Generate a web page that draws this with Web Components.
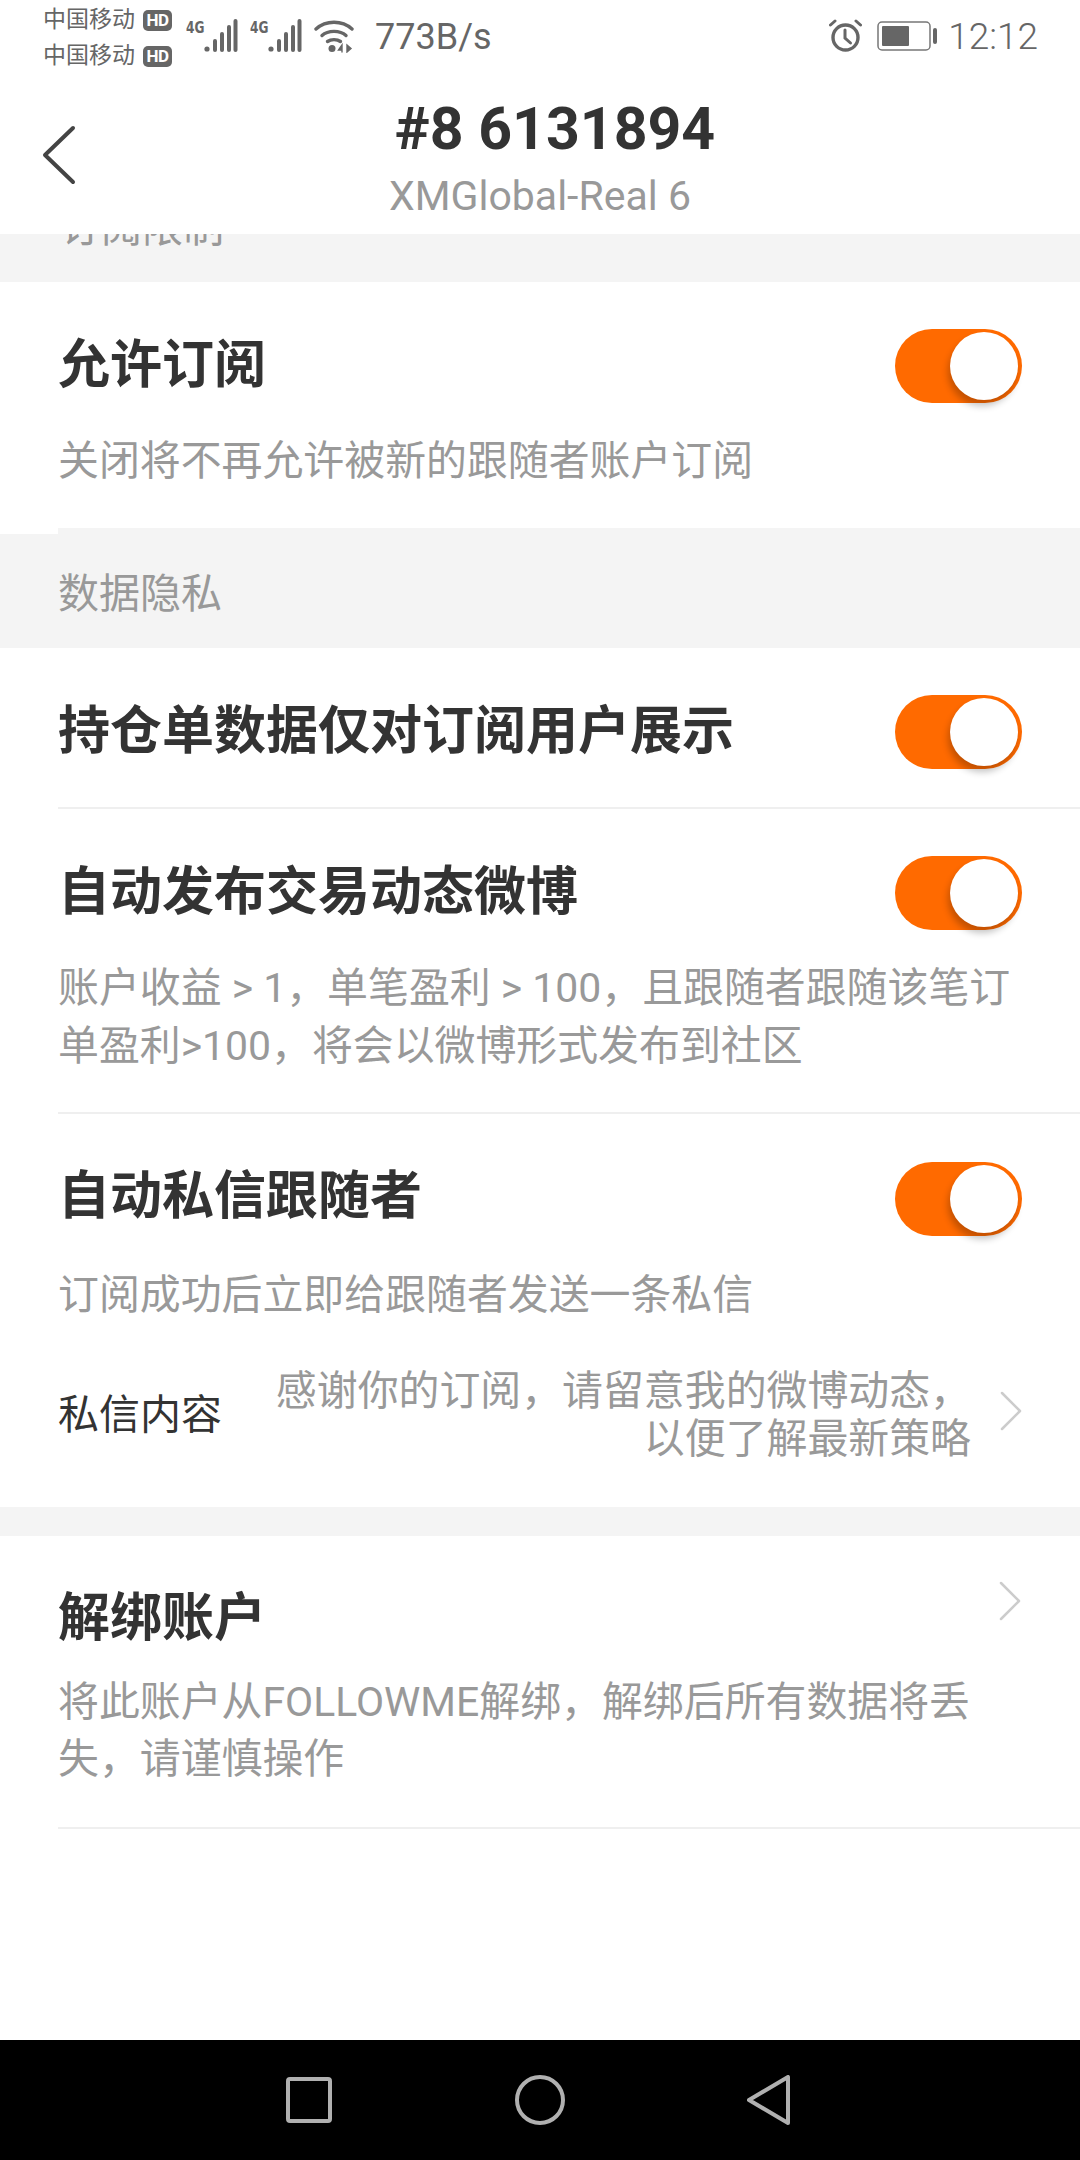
<!DOCTYPE html>
<html lang="zh">
<head>
<meta charset="utf-8">
<title>账户设置</title>
<style>
    html, body { margin: 0; padding: 0; background: #fff; }
    body {
        width: 1080px;
        height: 2160px;
        display: flex;
        flex-direction: column;
        overflow: hidden;
        font-family: Roboto, "Noto Sans CJK SC", sans-serif;
    }
</style>
</head>
<body>
<status-bar></status-bar>
<nav-header sub="XMGlobal-Real 6">#8 6131894</nav-header>
<peek-band>订阅限制</peek-band>

<setting-row style="--pt:47px;--gap:29px;--pb:38px">
    <span slot="title">允许订阅</span>
    <toggle-switch slot="control"></toggle-switch>
    <span slot="desc">关闭将不再允许被新的跟随者账户订阅</span>
</setting-row>

<section-label>数据隐私</section-label>

<setting-row divider style="--pt:47px;--gap:0px;--pb:38px">
    <span slot="title">持仓单数据仅对订阅用户展示</span>
    <toggle-switch slot="control"></toggle-switch>
</setting-row>
<setting-row divider style="--pt:47px;--gap:29px;--pb:37px">
    <span slot="title">自动发布交易动态微博</span>
    <toggle-switch slot="control"></toggle-switch>
    <span slot="desc">账户收益 &gt; 1，单笔盈利 &gt; 100，且跟随者跟随该笔订单盈利&gt;100，将会以微博形式发布到社区</span>
</setting-row>
<setting-row style="--pt:48px;--gap:30px;--pb:0px;--title-lift:4px">
    <span slot="title">自动私信跟随者</span>
    <toggle-switch slot="control"></toggle-switch>
    <span slot="desc">订阅成功后立即给跟随者发送一条私信</span>
    <message-row slot="extra" label="私信内容">感谢你的订阅，请留意我的微博动态，<br>以便了解最新策略</message-row>
</setting-row>

<gap-band></gap-band>

<setting-row divider style="--pt:46px;--gap:18px;--pb:39px;--desc-lh:57px">
    <span slot="title">解绑账户</span>
    <chevron-icon slot="control" style="margin:-36px 1px 0 0"></chevron-icon>
    <span slot="desc">将此账户从FOLLOWME解绑，解绑后所有数据将丢失，请谨慎操作</span>
</setting-row>

<page-spacer></page-spacer>
<system-nav></system-nav>

<script>
    const CJK = 'Roboto, "Noto Sans CJK SC", sans-serif';

    class StatusBar extends HTMLElement {
        constructor() {
            super();
            this.attachShadow({ mode: 'open' });
        }

        _signal() {
            return `
                <svg width="34" height="34" viewBox="0 0 34 34" fill="#666">
                    <circle cx="3" cy="30" r="2.6"/>
                    <rect x="9" y="20" width="4" height="13" rx="2"/>
                    <rect x="16" y="13" width="4" height="20" rx="2"/>
                    <rect x="23" y="6" width="4" height="27" rx="2"/>
                    <rect x="29.5" y="0" width="4" height="33" rx="2"/>
                </svg>`;
        }

        connectedCallback() {
            this.shadowRoot.innerHTML = `
                <style>
                    :host {
                        display: flex;
                        height: 74px;
                        flex: none;
                        background: #fff;
                        color: #666;
                        font-family: ${CJK};
                        box-sizing: border-box;
                        padding-left: 43px;
                    }
                    .carriers {
                        display: flex;
                        flex-direction: column;
                        gap: 8px;
                        padding-top: 6px;
                        width: 143px;
                        flex: none;
                    }
                    .carrier {
                        display: flex;
                        align-items: center;
                        gap: 8px;
                        height: 28px;
                        font-size: 23px;
                        line-height: 28px;
                        white-space: nowrap;
                    }
                    .hd {
                        width: 29px;
                        height: 21px;
                        border-radius: 5px;
                        background: #666;
                        color: #fff;
                        font-size: 17px;
                        line-height: 21px;
                        font-weight: 700;
                        text-align: center;
                        letter-spacing: -0.5px;
                    }
                    .net {
                        display: flex;
                        align-items: flex-start;
                        flex: none;
                        padding-top: 19px;
                    }
                    .net b {
                        font: 700 15px/18px "Liberation Sans Narrow", "DejaVu Sans Condensed", Roboto, sans-serif;
                        width: 18px;
                        transform: scaleX(.9);
                        transform-origin: left;
                    }
                    .wifi { margin: 20px 0 0 12px; flex: none; }
                    .speed {
                        margin-left: 21px;
                        padding-top: 17px;
                        font-size: 36px;
                        line-height: 40px;
                        flex: 1;
                    }
                    .right {
                        display: flex;
                        align-items: flex-start;
                        padding: 19px 42px 0 0;
                    }
                    .time {
                        margin: -2px 0 0 10px;
                        font-size: 37px;
                        font-weight: 300;
                        line-height: 40px;
                    }
                    .alarm { margin-right: 15px; }
                </style>
                <div class="carriers">
                    <div class="carrier">中国移动<span class="hd">HD</span></div>
                    <div class="carrier">中国移动<span class="hd">HD</span></div>
                </div>
                <div class="net"><b>4G</b>${this._signal()}</div>
                <div class="net" style="margin-left:12px"><b>4G</b>${this._signal()}</div>
                <svg class="wifi" width="40" height="33" viewBox="0 0 40 33" fill="none" stroke="#666" stroke-width="3.4" stroke-linecap="round">
                    <path d="M2 9 C12 0 28 0 38 9"/>
                    <path d="M8 15.500 C14 10 26 10 32 15.500"/>
                    <path d="M13.500 21.500 C17 19 23 19 26.500 21.500"/>
                    <circle cx="18" cy="28.500" r="3.500" fill="#666" stroke="none"/>
                    <path d="M28 25 L24.500 30 H28 Z M28 25 V32 M33 25 V32 L37 28.500 Z" stroke-width="1.400" fill="#666"/>
                </svg>
                <div class="speed">773B/s</div>
                <div class="right">
                    <svg class="alarm" width="33" height="34" viewBox="0 0 33 34" fill="none" stroke="#666" stroke-linecap="round">
                        <circle cx="16.500" cy="18.500" r="12.500" stroke-width="3.400"/>
                        <path d="M16 11 V19 L21.500 24" stroke-width="3"/>
                        <path d="M1.500 6 L6 2 M31.500 6 L27 2" stroke-width="3"/>
                    </svg>
                    <svg width="61" height="33" viewBox="0 0 61 33">
                        <rect x="1" y="3" width="52" height="28" rx="4" fill="none" stroke="#777" stroke-width="1.500"/>
                        <rect x="5" y="7" width="27" height="20" rx="1" fill="#666"/>
                        <rect x="56" y="9" width="4" height="16" rx="2" fill="#666"/>
                    </svg>
                    <div class="time">12:12</div>
                </div>
            `;
        }
    }

    class NavHeader extends HTMLElement {
        constructor() {
            super();
            this.attachShadow({ mode: 'open' });
        }

        connectedCallback() {
            this.shadowRoot.innerHTML = `
                <style>
                    :host {
                        display: grid;
                        grid-template-columns: 1fr auto 1fr;
                        height: 160px;
                        flex: none;
                        background: #fff;
                        box-sizing: border-box;
                        font-family: ${CJK};
                    }
                    .back { padding: 51px 0 0 42px; }
                    .center { text-align: center; padding-top: 24px; }
                    .title {
                        font-size: 59px;
                        font-weight: 700;
                        line-height: 62px;
                        color: #333;
                        margin-left: 30px;
                    }
                    .sub {
                        font-size: 41px;
                        line-height: 48px;
                        color: #999;
                        margin-top: 12px;
                    }
                </style>
                <div class="back">
                    <svg width="34" height="60" viewBox="0 0 34 60" fill="none" stroke="#444" stroke-width="4" stroke-linecap="round" stroke-linejoin="round">
                        <path d="M31 3 L3 30 L31 57"/>
                    </svg>
                </div>
                <div class="center">
                    <div class="title"><slot></slot></div>
                    <div class="sub">${this.getAttribute('sub')}</div>
                </div>
                <div></div>
            `;
        }
    }

    class PeekBand extends HTMLElement {
        constructor() {
            super();
            this.attachShadow({ mode: 'open' });
            // строка прокручена под шапку, видно только низ текста
            this.shadowRoot.innerHTML = `
                <style>
                    :host {
                        display: flex;
                        align-items: flex-end;
                        height: 48px;
                        flex: none;
                        overflow: hidden;
                        background: #f4f4f4;
                        padding-left: 60px;
                        color: #999;
                        font-size: 41px;
                        line-height: 58px;
                    }
                    div { flex: none; margin-bottom: 25px; }
                </style>
                <div><slot></slot></div>
            `;
        }
    }

    class SectionLabel extends HTMLElement {
        constructor() {
            super();
            this.attachShadow({ mode: 'open' });
            this.shadowRoot.innerHTML = `
                <style>
                    :host {
                        display: block;
                        height: 120px;
                        flex: none;
                        background: #f4f4f4;
                        color: #999;
                        font-size: 41px;
                        line-height: 58px;
                    }
                    .notch { width: 58px; height: 6px; background: #fff; }
                    .text { padding: 31px 0 0 58px; }
                </style>
                <div class="notch"></div>
                <div class="text"><slot></slot></div>
            `;
        }
    }

    class GapBand extends HTMLElement {
        constructor() {
            super();
            this.attachShadow({ mode: 'open' });
            this.shadowRoot.innerHTML = `
                <style>
                    :host { display: block; height: 29px; flex: none; background: #f4f4f4; }
                </style>
            `;
        }
    }

    class SettingRow extends HTMLElement {
        constructor() {
            super();
            this.attachShadow({ mode: 'open' });
            this.shadowRoot.innerHTML = `
                <style>
                    :host {
                        display: block;
                        flex: none;
                        background: #fff;
                        padding-left: 58px;
                    }
                    .inner { padding: var(--pt) 0 var(--pb); }
                    :host([divider]) .inner { border-bottom: 2px solid #efefef; }
                    .head {
                        display: flex;
                        align-items: center;
                        justify-content: space-between;
                        min-height: 74px;
                        padding-right: 58px;
                    }
                    .title {
                        font-size: 52px;
                        font-weight: 700;
                        line-height: 64px;
                        color: #333;
                        margin-bottom: var(--title-lift, 0);
                    }
                    .desc {
                        margin-top: var(--gap);
                        padding-right: 58px;
                        font-size: 40.9px;
                        line-height: var(--desc-lh, 58px);
                        color: #999;
                    }
                </style>
                <div class="inner">
                    <div class="head">
                        <div class="title"><slot name="title"></slot></div>
                        <slot name="control"></slot>
                    </div>
                    <div class="desc"><slot name="desc"></slot></div>
                    <slot name="extra"></slot>
                </div>
            `;
        }
    }

    class ToggleSwitch extends HTMLElement {
        constructor() {
            super();
            this.attachShadow({ mode: 'open' });
            this.shadowRoot.innerHTML = `
                <style>
                    :host {
                        display: flex;
                        justify-content: flex-end;
                        align-items: center;
                        width: 127px;
                        height: 74px;
                        flex: none;
                        box-sizing: border-box;
                        padding-right: 4px;
                        border-radius: 37px;
                        background: #ff6a00;
                    }
                    i {
                        display: block;
                        width: 68px;
                        height: 68px;
                        border-radius: 50%;
                        background: #fff;
                        box-shadow: -2px 6px 7px rgba(0, 0, 0, .24);
                    }
                </style>
                <i></i>
            `;
        }
    }

    class ChevronIcon extends HTMLElement {
        constructor() {
            super();
            this.attachShadow({ mode: 'open' });
            this.shadowRoot.innerHTML = `
                <style>
                    :host { display: block; width: 22px; height: 40px; flex: none; }
                    svg { display: block; }
                </style>
                <svg width="22" height="40" viewBox="0 0 22 40" fill="none" stroke="#ccc" stroke-width="2.500" stroke-linecap="round" stroke-linejoin="round">
                    <path d="M2 2 L20 20 L2 38"/>
                </svg>
            `;
        }
    }

    class MessageRow extends HTMLElement {
        constructor() {
            super();
            this.attachShadow({ mode: 'open' });
        }

        connectedCallback() {
            this.shadowRoot.innerHTML = `
                <style>
                    :host {
                        display: flex;
                        align-items: center;
                        margin-top: 43px;
                        padding: 0 58px 44px 0;
                    }
                    .label { flex: none; font-size: 41px; line-height: 58px; color: #333; }
                    .value {
                        flex: 1;
                        text-align: right;
                        margin-right: 29px;
                        font-size: 40.9px;
                        line-height: 48px;
                        color: #999;
                    }
                    chevron-icon { margin-top: -8px; }
                </style>
                <div class="label">${this.getAttribute('label')}</div>
                <div class="value"><slot></slot></div>
                <chevron-icon></chevron-icon>
            `;
        }
    }

    class PageSpacer extends HTMLElement {
        constructor() {
            super();
            this.attachShadow({ mode: 'open' });
            this.shadowRoot.innerHTML = `
                <style>
                    :host { display: block; flex: 1; background: #fff; }
                </style>
            `;
        }
    }

    class SystemNav extends HTMLElement {
        constructor() {
            super();
            this.attachShadow({ mode: 'open' });
            this.shadowRoot.innerHTML = `
                <style>
                    :host {
                        display: flex;
                        justify-content: space-between;
                        align-items: center;
                        height: 120px;
                        flex: none;
                        box-sizing: border-box;
                        padding: 0 289px 0 286px;
                        background: #000;
                    }
                    svg { display: block; }
                </style>
                <svg width="46" height="46" viewBox="0 0 46 46" fill="none" stroke="#b0b0b0" stroke-width="4">
                    <rect x="2" y="2" width="42" height="42" rx="2"/>
                </svg>
                <svg width="50" height="50" viewBox="0 0 50 50" fill="none" stroke="#b0b0b0" stroke-width="4">
                    <circle cx="25" cy="25" r="23"/>
                </svg>
                <svg width="44" height="50" viewBox="0 0 44 50" fill="none" stroke="#b0b0b0" stroke-width="4" stroke-linejoin="round">
                    <path d="M41 2 V48 L2 25 Z"/>
                </svg>
            `;
        }
    }

    customElements.define('chevron-icon', ChevronIcon);
    customElements.define('status-bar', StatusBar);
    customElements.define('nav-header', NavHeader);
    customElements.define('peek-band', PeekBand);
    customElements.define('section-label', SectionLabel);
    customElements.define('gap-band', GapBand);
    customElements.define('setting-row', SettingRow);
    customElements.define('toggle-switch', ToggleSwitch);
    customElements.define('message-row', MessageRow);
    customElements.define('page-spacer', PageSpacer);
    customElements.define('system-nav', SystemNav);
</script>
</body>
</html>
